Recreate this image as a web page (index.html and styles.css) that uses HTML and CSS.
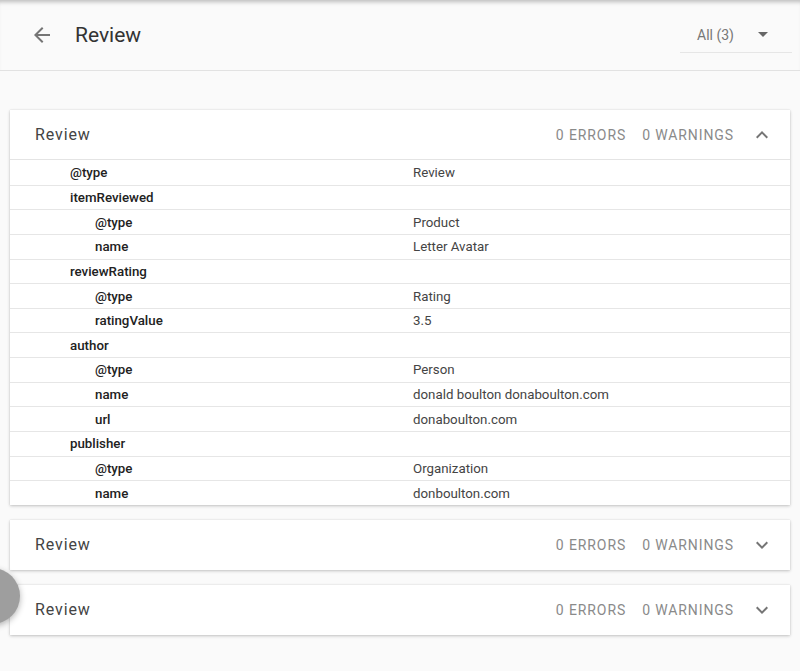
FILE: index.html
```html
<!DOCTYPE html>
<html>
<head>
<meta charset="utf-8">
<link rel="stylesheet" href="styles.css">
</head>
<body>
<header class="topbar">
  <svg class="back" width="24" height="24" viewBox="0 0 24 24"><path d="M20 11H7.83l5.59-5.59L12 4l-8 8 8 8 1.41-1.41L7.83 13H20v-2z" fill="#757575"/></svg>
  <h1 class="title">Review</h1>
  <div class="select">
    <span class="select-label">All (3)</span>
    <svg class="select-arrow" width="10" height="5" viewBox="0 0 10 5"><path d="M0 0l5 5 5-5z" fill="#666"/></svg>
  </div>
</header>
<main class="list">
  <section class="card">
    <div class="card-head">
      <span class="card-title">Review</span>
      <span class="count">0 ERRORS</span>
      <span class="count">0 WARNINGS</span>
      <svg class="chev" width="12" height="8" viewBox="0 0 12 8"><path d="M1.4 7.4L6 2.8l4.6 4.6L12 6 6 0 0 6z" fill="#757575"/></svg>
    </div>
    <div class="rows">
      <div class="row"><span class="key d1">@type</span><span class="val">Review</span></div>
      <div class="row"><span class="key d1">itemReviewed</span><span class="val"></span></div>
      <div class="row"><span class="key d2">@type</span><span class="val">Product</span></div>
      <div class="row"><span class="key d2">name</span><span class="val">Letter Avatar</span></div>
      <div class="row"><span class="key d1">reviewRating</span><span class="val"></span></div>
      <div class="row"><span class="key d2">@type</span><span class="val">Rating</span></div>
      <div class="row"><span class="key d2">ratingValue</span><span class="val">3.5</span></div>
      <div class="row"><span class="key d1">author</span><span class="val"></span></div>
      <div class="row"><span class="key d2">@type</span><span class="val">Person</span></div>
      <div class="row"><span class="key d2">name</span><span class="val">donald boulton donaboulton.com</span></div>
      <div class="row"><span class="key d2">url</span><span class="val">donaboulton.com</span></div>
      <div class="row"><span class="key d1">publisher</span><span class="val"></span></div>
      <div class="row"><span class="key d2">@type</span><span class="val">Organization</span></div>
      <div class="row"><span class="key d2">name</span><span class="val">donboulton.com</span></div>
    </div>
  </section>
  <section class="card collapsed">
    <div class="card-head">
      <span class="card-title">Review</span>
      <span class="count">0 ERRORS</span>
      <span class="count">0 WARNINGS</span>
      <svg class="chev" width="12" height="8" viewBox="0 0 12 8"><path d="M1.4 0.6L6 5.2l4.6-4.6L12 2 6 8 0 2z" fill="#757575"/></svg>
    </div>
  </section>
  <section class="card collapsed">
    <div class="card-head">
      <span class="card-title">Review</span>
      <span class="count">0 ERRORS</span>
      <span class="count">0 WARNINGS</span>
      <svg class="chev" width="12" height="8" viewBox="0 0 12 8"><path d="M1.4 0.6L6 5.2l4.6-4.6L12 2 6 8 0 2z" fill="#757575"/></svg>
    </div>
  </section>
</main>
<div class="fab"></div>
</body>
</html>
```
FILE: styles.css
```css
html, body {
  margin: 0;
  padding: 0;
}
body {
  background: #fafafa;
  font-family: Roboto, "Noto Sans", sans-serif;
  color: #333;
  height: 671px;
  overflow: hidden;
  position: relative;
}
.topbar {
  height: 71px;
  box-sizing: border-box;
  display: flex;
  align-items: center;
  padding-left: 30px;
  border-bottom: 1px solid #e2e2e2;
  box-shadow: inset 0 5px 4px -3px rgba(0,0,0,0.25);
}
.back {
  display: block;
}
.title {
  margin: 0 0 0 21px;
  font-size: 21px;
  font-weight: 400;
  color: #333;
  flex: 1;
}
.select {
  width: 112px;
  height: 36px;
  margin-right: 8px;
  box-sizing: border-box;
  border-bottom: 1px solid #e6e6e6;
  display: flex;
  align-items: center;
  padding-left: 17px;
  padding-right: 24px;
}
.select-label {
  font-size: 14px;
  color: #777;
  flex: 1;
}
.select-arrow {
  display: block;
}
.list {
  padding: 39px 10px 0;
  display: flex;
  flex-direction: column;
  gap: 15px;
}
.card {
  background: #fff;
  box-shadow: 0 1px 3px rgba(0,0,0,0.22), 0 0 1px rgba(0,0,0,0.12);
}
.card-head {
  height: 49px;
  display: flex;
  align-items: center;
  padding: 0 22px 0 25px;
}
.collapsed .card-head {
  height: 50px;
}
.card-title {
  flex: 1;
  font-size: 16px;
  letter-spacing: 0.9px;
  color: #444;
}
.count {
  font-size: 14px;
  letter-spacing: 0.9px;
  color: #8a8a8a;
  margin-left: 16px;
}
.chev {
  margin-left: 22px;
  display: block;
}
.rows {
  border-top: 1px solid #e4e4e4;
}
.row {
  display: flex;
  align-items: center;
  height: 24.65px;
  box-sizing: border-box;
  font-size: 13.3px;
}
.row + .row {
  border-top: 1px solid #e6e6e6;
}
.key {
  width: 403px;
  box-sizing: border-box;
  font-weight: 500;
  color: #222;
}
.key.d1 { padding-left: 60px; }
.key.d2 { padding-left: 85px; }
.val {
  color: #444;
}
.fab {
  position: absolute;
  left: -36px;
  top: 568px;
  width: 56px;
  height: 56px;
  border-radius: 50%;
  background: #9e9e9e;
  box-shadow: 0 2px 6px rgba(0,0,0,0.3);
}
```
